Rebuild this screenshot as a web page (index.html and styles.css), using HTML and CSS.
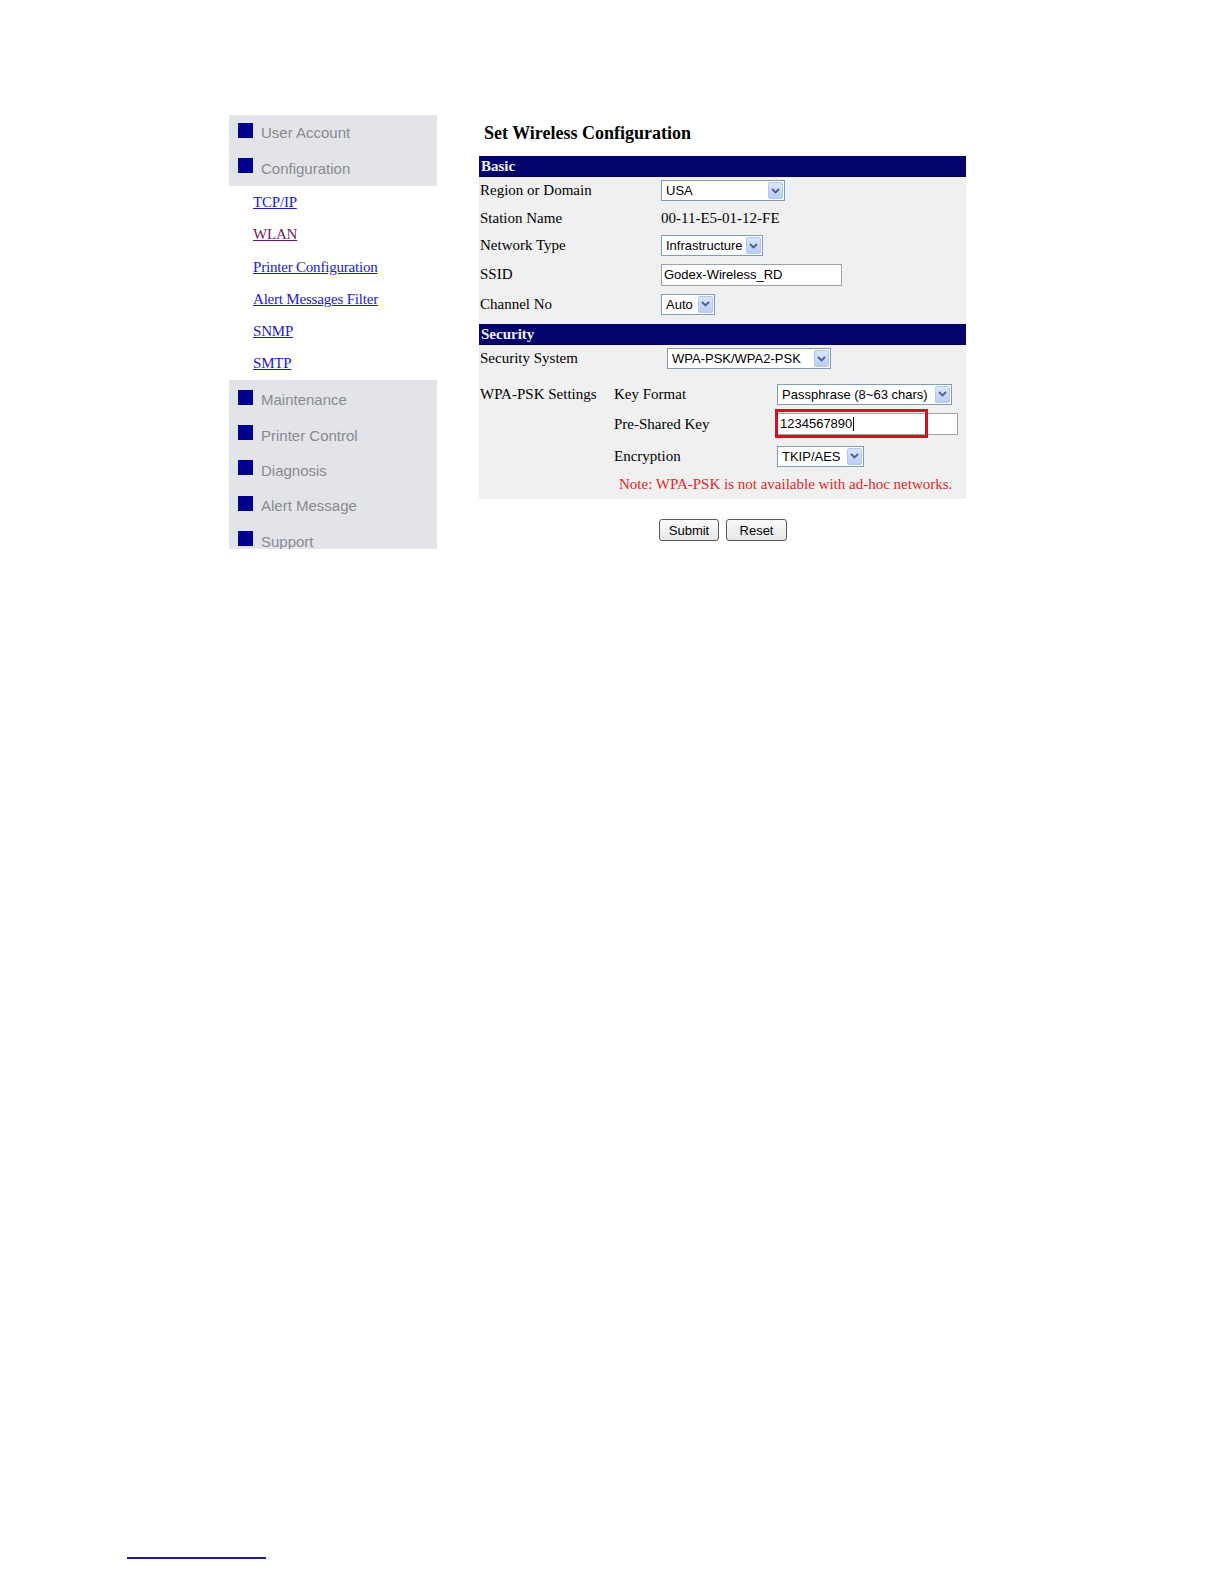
FILE: index.html
```html
<!DOCTYPE html>
<html lang="en">
<head>
  <meta charset="UTF-8">
  <meta name="viewport" content="width=device-width, initial-scale=1.0">
  <link rel="stylesheet" href="styles.css">
  <title>Set Wireless Configuration</title>
</head>
<body>
<div class="page">
  <div class="layout">

    <div class="sidebar">
      <div class="menu">
        <div class="menuItem"><span class="sq"></span>User Account</div>
        <div class="menuItem"><span class="sq"></span>Configuration</div>
      </div>
      <div class="links">
        <a href="#">TCP/IP</a>
        <a href="#" class="visited">WLAN</a>
        <a href="#">Printer Configuration</a>
        <a href="#">Alert Messages Filter</a>
        <a href="#">SNMP</a>
        <a href="#">SMTP</a>
      </div>
      <div class="menu bottom">
        <div class="menuItem"><span class="sq"></span>Maintenance</div>
        <div class="menuItem"><span class="sq"></span>Printer Control</div>
        <div class="menuItem"><span class="sq"></span>Diagnosis</div>
        <div class="menuItem"><span class="sq"></span>Alert Message</div>
        <div class="menuItem"><span class="sq"></span>Support</div>
      </div>
    </div>

    <div class="main">
      <h1 class="title">Set Wireless Configuration</h1>
      <div class="panel">
        <div class="head">Basic</div>
        <div class="basic">
          <div class="row r1">
            <div class="label">Region or Domain</div>
            <div class="sel w124"><span class="val">USA</span><span class="arrow"><svg width="9" height="6" viewBox="0 0 9 6"><path d="M1 1 L4.5 4.5 L8 1" fill="none" stroke="#4d6185" stroke-width="1.8"/></svg></span></div>
          </div>
          <div class="row r2">
            <div class="label">Station Name</div>
            <div class="plain">00-11-E5-01-12-FE</div>
          </div>
          <div class="row r3">
            <div class="label">Network Type</div>
            <div class="sel w102"><span class="val">Infrastructure</span><span class="arrow"><svg width="9" height="6" viewBox="0 0 9 6"><path d="M1 1 L4.5 4.5 L8 1" fill="none" stroke="#4d6185" stroke-width="1.8"/></svg></span></div>
          </div>
          <div class="row r4">
            <div class="label">SSID</div>
            <div class="txt w181">Godex-Wireless_RD</div>
          </div>
          <div class="row r5">
            <div class="label">Channel No</div>
            <div class="sel w54"><span class="val">Auto</span><span class="arrow"><svg width="9" height="6" viewBox="0 0 9 6"><path d="M1 1 L4.5 4.5 L8 1" fill="none" stroke="#4d6185" stroke-width="1.8"/></svg></span></div>
          </div>
        </div>
        <div class="head">Security</div>
        <div class="security">
          <div class="row r6">
            <div class="label">Security System</div>
            <div class="sel w164 shift"><span class="val">WPA-PSK/WPA2-PSK</span><span class="arrow"><svg width="9" height="6" viewBox="0 0 9 6"><path d="M1 1 L4.5 4.5 L8 1" fill="none" stroke="#4d6185" stroke-width="1.8"/></svg></span></div>
          </div>
          <div class="wpa">
            <div class="wpaLabel">WPA-PSK Settings</div>
            <div class="wpaBody">
              <div class="row r7">
                <div class="sublabel">Key Format</div>
                <div class="sel w175"><span class="val">Passphrase (8~63 chars)</span><span class="arrow"><svg width="9" height="6" viewBox="0 0 9 6"><path d="M1 1 L4.5 4.5 L8 1" fill="none" stroke="#4d6185" stroke-width="1.8"/></svg></span></div>
              </div>
              <div class="row r8">
                <div class="sublabel">Pre-Shared Key</div>
                <div class="keyWrap">
                  <div class="txt w181">1234567890<span class="caret"></span></div>
                  <div class="mark"></div>
                </div>
              </div>
              <div class="row r9">
                <div class="sublabel">Encryption</div>
                <div class="sel w87"><span class="val">TKIP/AES</span><span class="arrow"><svg width="9" height="6" viewBox="0 0 9 6"><path d="M1 1 L4.5 4.5 L8 1" fill="none" stroke="#4d6185" stroke-width="1.8"/></svg></span></div>
              </div>
              <div class="note">Note: WPA-PSK is not available with ad-hoc networks.</div>
            </div>
          </div>
        </div>
      </div>
      <div class="buttons">
        <button class="btn b60">Submit</button>
        <button class="btn b61">Reset</button>
      </div>
    </div>

  </div>
  <div class="footnote"></div>
</div>
</body>
</html>
```

FILE: styles.css
```css
* {
  margin: 0;
  padding: 0;
  box-sizing: border-box;
}

body {
  background-color: #fff;
  font-family: 'Liberation Serif', 'Times New Roman', serif;
  font-size: 15px;
  color: #000;
}

.page {
  padding-top: 115px;
}

.layout {
  display: flex;
  padding-left: 229px;
  height: 434px;
}

/* left menu */

.sidebar {
  width: 208px;
  flex: none;
}

.menu {
  background-color: #e3e4e9;
  height: 71px;
}

.menu.bottom {
  height: 169px;
  padding-top: 2px;
  overflow: hidden;
}

.menuItem {
  height: 35.5px;
  display: flex;
  align-items: center;
  padding-left: 9px;
  font-family: 'Liberation Sans', Arial, sans-serif;
  font-size: 15px;
  color: #898a8e;
}

.menu.bottom .menuItem {
  height: 35.4px;
}

.sq {
  width: 15px;
  height: 15px;
  background-color: #00008e;
  margin-right: 8px;
  margin-top: -5px;
}

.links {
  height: 194px;
  display: flex;
  flex-direction: column;
  padding-left: 24px;
}

.links a {
  height: 32.3px;
  line-height: 32.3px;
  color: #1a1acc;
  text-decoration: underline;
  font-size: 15px;
  letter-spacing: -0.2px;
}

.links a.visited {
  color: #6b1a6b;
}

/* main panel */

.main {
  margin-left: 42px;
  width: 487px;
}

.title {
  font-size: 18px;
  font-weight: bold;
  height: 41px;
  line-height: 36px;
  padding-left: 5px;
}

.panel {
  background-color: #f0f0f0;
  padding-bottom: 0;
}

.head {
  background-color: #03036b;
  color: #f0f0ff;
  font-weight: bold;
  height: 21px;
  line-height: 21px;
  padding-left: 2px;
}

.basic {
  padding-bottom: 5px;
  margin-bottom: 1px;
}

.row {
  display: flex;
  align-items: center;
}

.r1 { height: 27px; }
.r2 { height: 28px; }
.r3 { height: 27px; }
.r4 { height: 31px; }
.r5 { height: 28px; }
.r6 { height: 27px; }
.r7 { height: 28px; }
.r8 { height: 32px; }
.r9 { height: 32px; }

.label {
  width: 182px;
  padding-left: 1px;
  flex: none;
}

.plain {
  font-size: 15px;
}

.sel {
  height: 21px;
  border: 1px solid #7f9db9;
  background-color: #fff;
  display: flex;
  align-items: center;
  justify-content: space-between;
  font-family: 'Liberation Sans', Arial, sans-serif;
  font-size: 13px;
  padding: 0 1px 0 4px;
}

.sel.shift {
  margin-left: 6px;
}

.val {
  white-space: nowrap;
}

.arrow {
  width: 15px;
  height: 17px;
  background: linear-gradient(#dbe6fd, #b8cdf8);
  border: 1px solid #b3c7f2;
  border-radius: 2px;
  display: flex;
  align-items: center;
  justify-content: center;
  flex: none;
}

.w124 { width: 124px; }
.w102 { width: 102px; }
.w54 { width: 54px; }
.w164 { width: 164px; }
.w175 { width: 175px; }
.w87 { width: 87px; }
.w181 { width: 181px; }

.txt {
  height: 22px;
  border: 1px solid #9aa2aa;
  background-color: #fff;
  font-family: 'Liberation Sans', Arial, sans-serif;
  font-size: 13px;
  line-height: 20px;
  padding-left: 2px;
  display: flex;
  align-items: center;
}

.caret {
  width: 1px;
  height: 14px;
  background-color: #000;
  margin-left: 1px;
}

.security {
  padding-bottom: 0;
}

.wpa {
  display: flex;
  padding-top: 8px;
  padding-bottom: 1px;
}

.wpaLabel {
  width: 135px;
  padding-left: 1px;
  flex: none;
  line-height: 28px;
}

.wpaBody {
  flex: 1;
}

.sublabel {
  width: 163px;
  flex: none;
}

.keyWrap {
  position: relative;
}

.mark {
  position: absolute;
  left: -2px;
  top: -4px;
  width: 153px;
  height: 29px;
  border: 3px solid #d3121e;
}

.note {
  color: #e2262a;
  height: 26px;
  line-height: 24px;
  padding-left: 5px;
  white-space: nowrap;
}

.buttons {
  display: flex;
  justify-content: center;
  gap: 7px;
  padding-top: 20px;
  padding-left: 1px;
}

.btn {
  height: 22px;
  font-family: 'Liberation Sans', Arial, sans-serif;
  font-size: 13px;
  color: #000;
  background: linear-gradient(#fafafa, #e6e6e6);
  border: 1px solid #5a5a5a;
  border-radius: 3px;
}

.b60 { width: 60px; }
.b61 { width: 61px; }

.footnote {
  margin: 1008px 0 0 127px;
  width: 139px;
  border-top: 2px solid #1c1c8a;
}
```
